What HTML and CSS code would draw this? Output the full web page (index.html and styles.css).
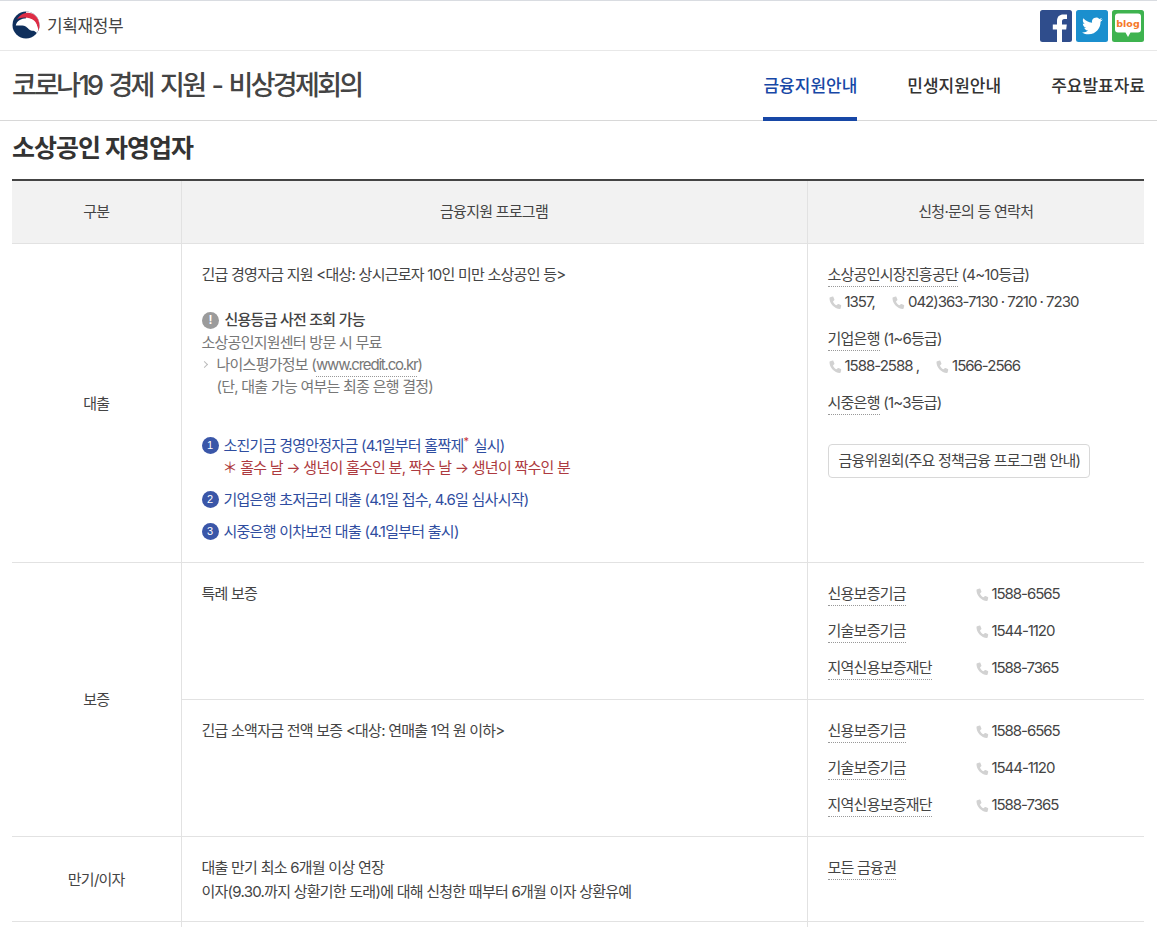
FILE: index.html
```html
<!DOCTYPE html>
<html lang="ko">
<head>
<meta charset="utf-8">
<title>코로나19 경제 지원</title>
<link rel="stylesheet" href="styles.css">
</head>
<body>
<header class="topbar">
  <div class="brand">
    <svg class="emblem" viewBox="0 0 28 28" width="28" height="28">
      <circle cx="14" cy="14" r="13.500" fill="#0f2f5c"/>
      <path d="M14 .5A13.500 13.500 0 0 1 27.500 14 13.500 13.500 0 0 1 25 22L14 14z" fill="#fff"/>
      <path d="M5 8.500C8 3 14.500.3 20 2.500 26 5 29 12 26.500 20 26 14.500 23 9.800 18.500 7.800 13.500 5.800 8.500 6.300 5 8.500z" fill="#dd2c45"/>
      <path d="M3.800 14.500C4.500 10 9.500 7 15 7.200 21 7.500 25 11 25 15.500 25 18.800 22 20.500 19 19.500 16 18.500 15.500 15.800 12 14.800 9 14 6.500 14.600 3.800 14.500z" fill="#fff"/>
    </svg>
    <span class="brand-name">기획재정부</span>
  </div>
  <div class="social">
    <svg class="sns" viewBox="0 0 32 32" width="32" height="32"><rect width="32" height="32" rx="2.500" fill="#2f4d8c"/><path d="M22 32V19.500h4.200l.6-5H22v-3c0-1.500.5-2.500 2.500-2.500H27V4.600C26.500 4.500 25 4.400 23.300 4.400c-3.700 0-6.300 2.200-6.300 6.400v3.700h-4.200v5H17V32z" fill="#fff"/></svg>
    <svg class="sns" viewBox="0 0 32 32" width="32" height="32"><rect width="32" height="32" rx="2.500" fill="#1b8fce"/><path d="M26.500 9.500c-.8.400-1.600.6-2.400.7.900-.5 1.500-1.300 1.800-2.300-.8.500-1.700.8-2.600 1a4.200 4.200 0 0 0-7.200 3.800C12.600 12.500 9.500 10.900 7.400 8.300c-1.100 1.900-.6 4.300 1.300 5.600-.7 0-1.300-.2-1.900-.5 0 2 1.400 3.800 3.400 4.200-.6.200-1.300.2-1.900.1.500 1.700 2.100 2.900 3.900 2.900-1.800 1.400-4 2-6.200 1.800 1.900 1.200 4.100 1.900 6.500 1.900 7.800 0 12.300-6.600 12-12.500.9-.6 1.600-1.400 2.200-2.300z" fill="#fff"/></svg>
    <svg class="sns" viewBox="0 0 32 32" width="32" height="32"><rect width="32" height="32" rx="2.500" fill="#3eb34f"/><path d="M6 3.500h20a3 3 0 0 1 3 3v13a3 3 0 0 1-3 3h-7.500L16 27l-2.500-4.500H6a3 3 0 0 1-3-3v-13a3 3 0 0 1 3-3z" fill="#fff"/><text class="blog-mark" x="16" y="16.500" text-anchor="middle">blog</text></svg>
  </div>
</header>

<div class="titlebar">
  <h1 class="page-title">코로나19 경제 지원 - 비상경제회의</h1>
  <nav class="tabs">
    <a class="tab active">금융지원안내</a>
    <a class="tab">민생지원안내</a>
    <a class="tab">주요발표자료</a>
  </nav>
</div>

<main class="content">
  <h2 class="section-title">소상공인 자영업자</h2>
  <table class="grid">
    <colgroup><col class="c1"><col class="c2"><col class="c3"></colgroup>
    <thead>
      <tr><th>구분</th><th>금융지원 프로그램</th><th>신청·문의 등 연락처</th></tr>
    </thead>
    <tbody>
      <tr class="r-loan">
        <th class="side">대출</th>
        <td>
          <p class="line">긴급 경영자금 지원 &lt;대상: 상시근로자 10인 미만 소상공인 등&gt;</p>
          <div class="notice">
            <p class="notice-head"><span class="excl">!</span>신용등급 사전 조회 가능</p>
            <p class="muted">소상공인지원센터 방문 시 무료</p>
            <p class="muted arrow-line"><span class="chev"></span><span>나이스평가정보 (<span class="dot url">www.credit.co.kr</span>)</span></p>
            <p class="muted indent">(단, 대출 가능 여부는 최종 은행 결정)</p>
          </div>
          <div class="programs">
            <p class="prog"><span class="num">1</span><span>소진기금 경영안정자금 (4.1일부터 홀짝제<sup class="star">*</sup> 실시)</span></p>
            <p class="prog-note">＊ 홀수 날 → 생년이 홀수인 분, 짝수 날 → 생년이 짝수인 분</p>
            <p class="prog gap-a"><span class="num">2</span><span>기업은행 초저금리 대출 (4.1일 접수, 4.6일 심사시작)</span></p>
            <p class="prog gap-b"><span class="num">3</span><span>시중은행 이차보전 대출 (4.1일부터 출시)</span></p>
          </div>
        </td>
        <td>
          <p class="line"><span class="dot">소상공인시장진흥공단</span> (4~10등급)</p>
          <p class="phone-row"><span class="ph"><svg class="tel" viewBox="0 0 14 14" width="14" height="14"><use href="#tel"/></svg>1357,</span><span class="ph"><svg class="tel" viewBox="0 0 14 14" width="14" height="14"><use href="#tel"/></svg>042)363-7130 · 7210 · 7230</span></p>
          <p class="line org"><span class="dot">기업은행</span> (1~6등급)</p>
          <p class="phone-row"><span class="ph"><svg class="tel" viewBox="0 0 14 14" width="14" height="14"><use href="#tel"/></svg>1588-2588 ,</span><span class="ph"><svg class="tel" viewBox="0 0 14 14" width="14" height="14"><use href="#tel"/></svg>1566-2566</span></p>
          <p class="line org"><span class="dot">시중은행</span> (1~3등급)</p>
          <a class="outline-btn">금융위원회(주요 정책금융 프로그램 안내)</a>
        </td>
      </tr>
      <tr class="r-guar">
        <th class="side" rowspan="2">보증</th>
        <td><p class="line">특례 보증</p></td>
        <td>
          <dl class="contacts">
            <div class="contact"><dt><span class="dot">신용보증기금</span></dt><dd><svg class="tel" viewBox="0 0 14 14" width="14" height="14"><use href="#tel"/></svg>1588-6565</dd></div>
            <div class="contact"><dt><span class="dot">기술보증기금</span></dt><dd><svg class="tel" viewBox="0 0 14 14" width="14" height="14"><use href="#tel"/></svg>1544-1120</dd></div>
            <div class="contact"><dt><span class="dot">지역신용보증재단</span></dt><dd><svg class="tel" viewBox="0 0 14 14" width="14" height="14"><use href="#tel"/></svg>1588-7365</dd></div>
          </dl>
        </td>
      </tr>
      <tr class="r-guar">
        <td><p class="line">긴급 소액자금 전액 보증 &lt;대상: 연매출 1억 원 이하&gt;</p></td>
        <td>
          <dl class="contacts">
            <div class="contact"><dt><span class="dot">신용보증기금</span></dt><dd><svg class="tel" viewBox="0 0 14 14" width="14" height="14"><use href="#tel"/></svg>1588-6565</dd></div>
            <div class="contact"><dt><span class="dot">기술보증기금</span></dt><dd><svg class="tel" viewBox="0 0 14 14" width="14" height="14"><use href="#tel"/></svg>1544-1120</dd></div>
            <div class="contact"><dt><span class="dot">지역신용보증재단</span></dt><dd><svg class="tel" viewBox="0 0 14 14" width="14" height="14"><use href="#tel"/></svg>1588-7365</dd></div>
          </dl>
        </td>
      </tr>
      <tr class="r-term">
        <th class="side">만기/이자</th>
        <td><p class="line">대출 만기 최소 6개월 이상 연장</p><p class="line">이자(9.30.까지 상환기한 도래)에 대해 신청한 때부터 6개월 이자 상환유예</p></td>
        <td><p class="line"><span class="dot">모든 금융권</span></p></td>
      </tr>
      <tr class="r-end"><th class="side"></th><td></td><td></td></tr>
    </tbody>
  </table>
</main>
<svg class="defs" width="0" height="0"><defs><symbol id="tel" viewBox="0 0 14 14"><path d="M2.200 1.200 4.600.6c.4-.1.700.1.800.4l1 2.500c.1.300 0 .6-.2.800L5 5.400c.6 1.700 1.800 3 3.500 3.900l1.200-1.100c.2-.2.500-.3.800-.2l2.300 1.100c.3.100.5.500.4.800l-.6 2.500c-.1.300-.4.500-.7.500C6.400 12.600 1.300 7.500 1.500 1.900c0-.3.300-.6.700-.7z" fill="#d2d2d2"/></symbol></defs></svg>
</body>
</html>
```
FILE: styles.css
```css
* { box-sizing: border-box; }
html, body { margin: 0; padding: 0; background: #fff; }
body {
  font-family: "Inter", "Noto Sans CJK KR", "Noto Sans", sans-serif;
  font-size: 15px;
  color: #444;
  letter-spacing: -0.75px;
  overflow: hidden;
  height: 927px;
}
p { margin: 0; }
.defs { position: absolute; }
.topbar {
  height: 51px;
  border-top: 1px solid #d9dce1;
  border-bottom: 1px solid #e8e8e8;
  padding: 9px 13px 0 12px;
  display: flex;
  justify-content: space-between;
}
.brand { display: flex; align-items: center; height: 30px; gap: 7px; }
.brand-name { font-size: 17px; color: #444; letter-spacing: -0.4px; margin-bottom: 2px; }
.social { display: flex; gap: 4px; }
.sns { display: block; }
.blog-mark { font: 700 9.500px "DejaVu Sans", sans-serif; fill: #f5792a; letter-spacing: 0; }
.titlebar {
  height: 70px;
  border-bottom: 1px solid #d8d8d8;
  padding: 0 12px;
  display: flex;
  justify-content: space-between;
}
.page-title {
  margin: 0;
  font-size: 27px;
  font-weight: 500;
  line-height: 70px;
  color: #444;
  letter-spacing: -2.7px;
  word-spacing: 2.750px;
}
.tabs { display: flex; gap: 50px; }
.tab {
  height: 70px;
  line-height: 70px;
  font-size: 17px;
  font-weight: 500;
  color: #333;
  letter-spacing: 0;
}
.tab.active { color: #1747a6; border-bottom: 4px solid #1747a6; }
.content { padding: 0 13px 0 12px; }
.section-title {
  margin: 0;
  height: 58px;
  line-height: 55px;
  font-size: 25px;
  font-weight: 700;
  color: #333;
  letter-spacing: -1px;
}
.grid {
  width: 1132px;
  table-layout: fixed;
  border-collapse: collapse;
  border-top: 2px solid #444;
}
.c1 { width: 169px; }
.c2 { width: 626px; }
.c3 { width: 337px; }
.grid thead th {
  height: 63px;
  padding-bottom: 3px;
  background: #f2f2f2;
  font-weight: 400;
  font-size: 15px;
  color: #444;
  border-bottom: 1px solid #e2e2e2;
  border-left: 1px solid #e2e2e2;
}
.grid thead th:first-child { border-left: 0; }
.grid tbody th.side {
  font-weight: 400;
  text-align: center;
  color: #444;
  padding-bottom: 2px;
  border-bottom: 1px solid #e2e2e2;
}
.grid tbody td {
  vertical-align: top;
  padding: 19px 20px 0;
  border-left: 1px solid #e2e2e2;
  border-bottom: 1px solid #e2e2e2;
  line-height: 24px;
}
.r-loan { height: 319px; }
.r-guar { height: 137px; }
.r-term { height: 85px; }
.r-end { height: 30px; }
.grid tbody td .line { line-height: 24px; height: 24px; }
.dot { border-bottom: 1px dotted #999; padding-bottom: 2px; }
.url { letter-spacing: -1.200px; }
.notice { margin-top: 20px; }
.notice-head { display: flex; align-items: center; height: 25px; padding-top: 2px; line-height: 22px; color: #444; font-weight: 500; }
.excl {
  width: 17px; height: 17px; border-radius: 50%;
  background: #9b9b9b; color: #fff;
  font: 700 12px/17px "Liberation Sans", sans-serif;
  text-align: center; margin-right: 6px;
}
.muted { color: #777; line-height: 22px; height: 22px; }
.arrow-line { display: flex; align-items: center; }
.chev {
  width: 5px; height: 5px; margin: 0 10px 0 0;
  border-top: 1px solid #bbb; border-right: 1px solid #bbb;
  transform: rotate(45deg);
}
.indent { padding-left: 15px; }
.programs { margin-top: 36px; }
.prog { display: flex; align-items: center; color: #2f4da0; height: 24px; line-height: 24px; }
.gap-a { margin-top: 8px; }
.gap-b { margin-top: 8px; }
.prog-note { color: #ad3a40; padding-left: 21px; height: 22px; line-height: 20px; }
.num {
  width: 17px; height: 17px; border-radius: 50%;
  background: #3a56a8; color: #fff;
  font: 400 11px/17px "Liberation Sans", sans-serif;
  text-align: center; margin-right: 5px; letter-spacing: 0;
}
.star { color: #c8323a; font-size: 11px; line-height: 0; vertical-align: 6px; margin-right: 2px; }
.phone-row { display: flex; gap: 16px; line-height: 30px; height: 30px; letter-spacing: -1px; }
.ph { display: flex; align-items: center; }
.tel { margin-right: 3px; flex: none; position: relative; top: 1px; }
.org { margin-top: 10px; }
.outline-btn {
  display: inline-block;
  margin-top: 29px;
  height: 34px;
  line-height: 32px;
  padding: 0 9px 0 10px;
  border: 1px solid #d8d8d8;
  border-radius: 4px;
  color: #444;
}
.contacts { margin: 0; }
.contact { display: flex; height: 37px; line-height: 24px; }
.contact dt { width: 147px; }
.contact dd { margin: 0; display: flex; align-items: center; height: 24px; letter-spacing: -1.050px; }
```
